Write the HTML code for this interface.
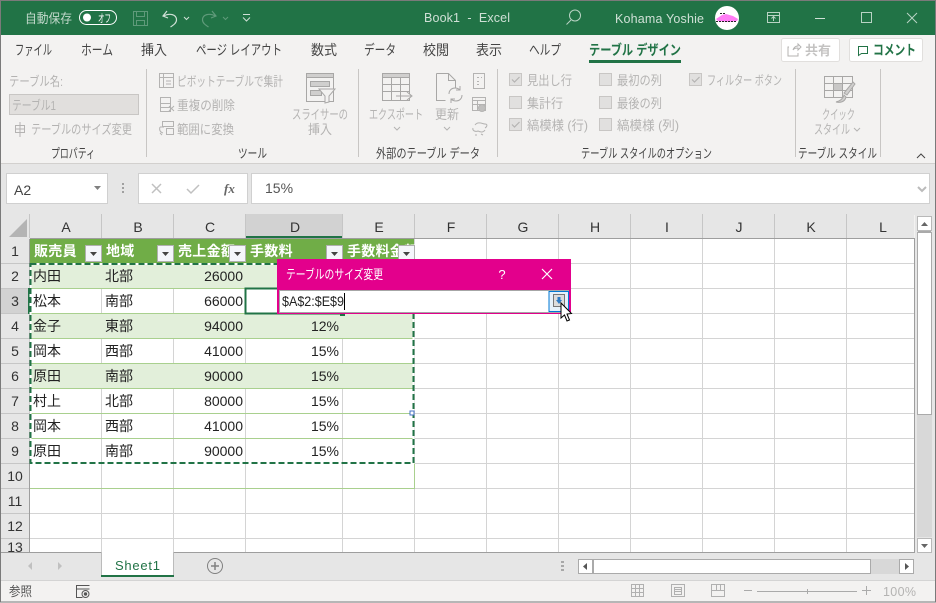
<!DOCTYPE html>
<html lang="ja"><head><meta charset="utf-8"><title>Book1 - Excel</title>
<style>
html,body{margin:0;padding:0;background:#f3f2f1;overflow:hidden}
svg{display:block;font-family:"Liberation Sans","Noto Sans CJK JP",sans-serif}
.tab{font-size:14px;fill:#444}
.dis{font-size:13px;fill:#b4b3b2}
.grp{font-size:13px;fill:#444}
.c{font-size:14px;fill:#222}
.n{font-size:14px;fill:#222;text-anchor:end}
.h{font-size:14px;font-weight:bold;fill:#fff;letter-spacing:.3px}
.col{font-size:14px;fill:#333;text-anchor:middle}
.ic{fill:none;stroke:#b4b3b2;stroke-width:1}
.cb{fill:#e1e0df;stroke:#c8c6c4}
.chk{fill:none;stroke:#b4b3b2;stroke-width:1.2}
.g{stroke:#d4d4d4;stroke-width:1}
.tl{stroke:#a9d08e;stroke-width:1}
.t{stroke:#b9d3c4;fill:none;stroke-width:1}
</style></head><body>
<svg width="936" height="603" viewBox="0 0 936 603" xmlns="http://www.w3.org/2000/svg">
<rect width="936" height="603" fill="#f3f2f1"/>
<!-- title bar -->
<rect x="0" y="0" width="936" height="35" fill="#217346"/>
<text x="25" y="23" font-size="13" fill="#c3d9cc" textLength="47" lengthAdjust="spacingAndGlyphs">自動保存</text>
<rect x="79.500" y="10.500" width="37" height="14" rx="7" fill="#217346" stroke="#fff"/>
<circle cx="87" cy="17.500" r="4" fill="#fff"/>
<text x="98" y="22" font-size="11" fill="#fff" textLength="13" lengthAdjust="spacingAndGlyphs">オフ</text>
<g fill="none" stroke="#5f9a7a"><rect x="133.500" y="11.500" width="14" height="14"/><path d="M136.500 11.500v5h8v-5M136.500 25.500v-5h8v5"/></g>
<g fill="none" stroke="#cfe0d6" stroke-width="1.200"><path d="M167 11l-4 5 5 2M163.500 16c6-3 13-2 13 4 0 3-3 5-6 7"/><path d="M184 17l2.500 2.500L189 17" stroke-width="1"/></g>
<g fill="none" stroke="#5f9a7a" stroke-width="1.200"><path d="M212 11l4 5-5 2M215.500 16c-6-3-13-2-13 4 0 3 3 5 6 7"/><path d="M223 17l2.500 2.500L228 17" stroke-width="1"/></g>
<path d="M243 14.500h7M243 17.500l3.500 3.500 3.500-3.500" fill="none" stroke="#cfe0d6"/>
<text x="424" y="22" font-size="12.500" fill="#cfe0d6" textLength="86" xml:space="preserve">Book1  -  Excel</text>
<g class="t"><circle cx="575" cy="15.500" r="5.500"/><path d="M571 20l-4.500 4.500"/></g>
<text x="615" y="23" font-size="12.500" fill="#cfe0d6" textLength="89">Kohama Yoshie</text>
<circle cx="727" cy="18" r="12" fill="#fff"/>
<path d="M716 19l6-4 4-1 7 2 5 3-1 2-9 1-10-1z" fill="#ff7cf5"/>
<path d="M716 21.500h21M720 13.500h5" stroke="#222" stroke-width="1" stroke-dasharray="2 1"/>
<g class="t"><rect x="767.500" y="12.500" width="12" height="10"/><path d="M767.500 15.500h12M773.500 21v-4M771.500 18.500l2-2 2 2"/></g>
<path d="M815 18.500h10" stroke="#cfe0d6"/>
<rect x="861.500" y="12.500" width="10" height="10" class="t"/>
<path d="M907 13l10 10M917 13l-10 10" class="t"/>
<!-- tabs -->
<text class="tab" x="15" y="55" textLength="37" lengthAdjust="spacingAndGlyphs">ファイル</text>
<text class="tab" x="81" y="55" textLength="32" lengthAdjust="spacingAndGlyphs">ホーム</text>
<text class="tab" x="141" y="55" textLength="26" lengthAdjust="spacingAndGlyphs">挿入</text>
<text class="tab" x="196" y="55" textLength="86" lengthAdjust="spacingAndGlyphs">ページ レイアウト</text>
<text class="tab" x="311" y="55" textLength="26" lengthAdjust="spacingAndGlyphs">数式</text>
<text class="tab" x="364" y="55" textLength="32" lengthAdjust="spacingAndGlyphs">データ</text>
<text class="tab" x="423" y="55" textLength="26" lengthAdjust="spacingAndGlyphs">校閲</text>
<text class="tab" x="476" y="55" textLength="26" lengthAdjust="spacingAndGlyphs">表示</text>
<text class="tab" x="529" y="55" textLength="32" lengthAdjust="spacingAndGlyphs">ヘルプ</text>
<text x="589" y="55" font-size="14" font-weight="bold" fill="#217346" textLength="92" lengthAdjust="spacingAndGlyphs">テーブル デザイン</text>
<rect x="589" y="60" width="92" height="3" fill="#217346"/>
<rect x="781.500" y="38.500" width="58" height="23" rx="2" fill="#fff" stroke="#e1dfdd"/>
<path d="M789 47h-1v9h10v-3M793 50c1-3 3-4 5-4v-2l3 3-3 3v-2c-2 0-4 0-5 2z" class="ic"/>
<text x="805" y="55" font-size="13" font-weight="bold" fill="#c4c3c2" textLength="26" lengthAdjust="spacingAndGlyphs">共有</text>
<rect x="849.500" y="38.500" width="73" height="23" rx="2" fill="#fff" stroke="#e1dfdd"/>
<path d="M858.500 46.500h9v7h-6l-3 2z" fill="none" stroke="#217346"/>
<text x="873" y="55" font-size="14" font-weight="bold" fill="#217346" textLength="43" lengthAdjust="spacingAndGlyphs">コメント</text>
<!-- ribbon -->
<g stroke="#c8c6c4"><path d="M146.500 69v88M358.500 69v88M497.500 69v88M795.500 69v88M880.500 69v88"/></g>
<text class="dis" x="9" y="86" textLength="54" lengthAdjust="spacingAndGlyphs">テーブル名:</text>
<rect x="9.500" y="94.500" width="129" height="20" fill="#e1dfdd" stroke="#c8c6c4"/>
<text class="dis" x="12" y="110" textLength="44" lengthAdjust="spacingAndGlyphs">テーブル1</text>
<g class="ic"><rect x="15.500" y="125.500" width="9" height="7"/><path d="M20 122v15M15.500 129h9"/></g>
<text class="dis" x="31" y="134" textLength="101" lengthAdjust="spacingAndGlyphs">テーブルのサイズ変更</text>
<text class="grp" x="51" y="158" textLength="44" lengthAdjust="spacingAndGlyphs">プロパティ</text>
<g class="ic"><rect x="159.500" y="73.500" width="14" height="14"/><path d="M160 77.500h13M163.500 74v13M166 81h5M166 84h5"/></g>
<text class="dis" x="177" y="86" textLength="106" lengthAdjust="spacingAndGlyphs">ピボットテーブルで集計</text>
<g class="ic"><rect x="160.500" y="97.500" width="10" height="14"/><path d="M160.500 103.500h10M160.500 107.500h10M169 106l5 5M174 106l-5 5"/></g>
<text class="dis" x="177" y="110" textLength="58" lengthAdjust="spacingAndGlyphs">重複の削除</text>
<g class="ic"><rect x="162.500" y="121.500" width="11" height="5"/><rect x="166.500" y="128.500" width="7" height="6"/><path d="M160 127h4M160 127c-1 3 0 5 3 6M162 135l-2-2"/></g>
<text class="dis" x="177" y="134" textLength="57" lengthAdjust="spacingAndGlyphs">範囲に変換</text>
<g class="ic" stroke-width="1"><rect x="306.500" y="73.500" width="27" height="28" fill="#f3f2f1" stroke="#a8a7a6"/><rect x="306.500" y="73.500" width="27" height="4" fill="#d0cfce" stroke="#a8a7a6"/><rect x="310.500" y="81.500" width="19" height="5" fill="#d0cfce" stroke="#a8a7a6"/><rect x="310.500" y="90.500" width="11" height="5" fill="#d0cfce" stroke="#a8a7a6"/><path d="M319 89h16l-6 7v6l-4 1v-7z" fill="#f3f2f1" stroke="#a8a7a6"/></g>
<text class="dis" x="292" y="119" textLength="56" lengthAdjust="spacingAndGlyphs">スライサーの</text>
<text class="dis" x="308" y="134" textLength="24" lengthAdjust="spacingAndGlyphs">挿入</text>
<text class="grp" x="238" y="158" textLength="29" lengthAdjust="spacingAndGlyphs">ツール</text>
<g stroke="#a8a7a6" fill="none"><rect x="382.500" y="73.500" width="27" height="27"/><rect x="382.500" y="73.500" width="27" height="4" fill="#d0cfce"/><path d="M382.500 84.500h27M382.500 91.500h27M391.500 78v22M400.500 78v22"/><path d="M396 96h15M407 92l5 4-5 4" fill="#f3f2f1"/></g>
<text class="dis" x="369" y="119" textLength="54" lengthAdjust="spacingAndGlyphs">エクスポート</text>
<path d="M394 127l3 3 3-3" class="ic"/>
<g stroke="#a8a7a6" fill="none"><path d="M436.500 73.500h12l7 7v8M436.500 73.500v27h9M448.500 73.500v7h7"/><path d="M449 94c0-4 3-6 6-6 2 0 4 1 5 2M462 95c0 4-3 6-6 6-2 0-4-1-5-2M460 86v4h-4M451 103v-4h4" stroke="#a8a7a6"/></g>
<text class="dis" x="435" y="119" textLength="24" lengthAdjust="spacingAndGlyphs">更新</text>
<path d="M444 127l3 3 3-3" class="ic"/>
<g class="ic"><rect x="473.500" y="73.500" width="11" height="15"/><path d="M477 77.500h2M481 77.500h1M477 81.500h2M477 84.500h2"/><rect x="472.500" y="97.500" width="13" height="13"/><path d="M472.500 100.500h13M472.500 104.500h13M477.500 101v9"/><circle cx="482" cy="108" r="3.500" fill="#c0bfbe"/><path d="M475 125c3-4 8-1 10-1 3 0 2 3 0 4M473 128c-1 3 3 4 5 3 2 1 5 2 7-1M475 135h2M481 134l2 1"/></g>
<text class="grp" x="376" y="158" textLength="104" lengthAdjust="spacingAndGlyphs">外部のテーブル データ</text>
<!-- checkboxes -->
<rect class="cb" x="509.500" y="73.500" width="12" height="12"/><path class="chk" d="M512 79.500l2.500 2.500 5-5"/>
<rect class="cb" x="509.500" y="96.500" width="12" height="12"/>
<rect class="cb" x="509.500" y="118.500" width="12" height="12"/><path class="chk" d="M512 124.500l2.500 2.500 5-5"/>
<rect class="cb" x="599.500" y="73.500" width="12" height="12"/>
<rect class="cb" x="599.500" y="96.500" width="12" height="12"/>
<rect class="cb" x="599.500" y="118.500" width="12" height="12"/>
<rect class="cb" x="689.500" y="73.500" width="12" height="12"/><path class="chk" d="M692 79.500l2.500 2.500 5-5"/>
<text class="dis" x="527" y="85" textLength="45" lengthAdjust="spacingAndGlyphs">見出し行</text>
<text class="dis" x="527" y="108" textLength="36" lengthAdjust="spacingAndGlyphs">集計行</text>
<text class="dis" x="527" y="130" textLength="61" lengthAdjust="spacingAndGlyphs">縞模様 (行)</text>
<text class="dis" x="617" y="85" textLength="45" lengthAdjust="spacingAndGlyphs">最初の列</text>
<text class="dis" x="617" y="108" textLength="45" lengthAdjust="spacingAndGlyphs">最後の列</text>
<text class="dis" x="617" y="130" textLength="62" lengthAdjust="spacingAndGlyphs">縞模様 (列)</text>
<text class="dis" x="707" y="85" textLength="75" lengthAdjust="spacingAndGlyphs">フィルター ボタン</text>
<text class="grp" x="581" y="158" textLength="131" lengthAdjust="spacingAndGlyphs">テーブル スタイルのオプション</text>
<g stroke="#a8a7a6" fill="none"><rect x="824.500" y="76.500" width="28" height="21"/><path d="M824.500 83.500h28M824.500 90.500h28M833.500 77v20M842.500 77v20"/><rect x="834" y="84" width="8" height="6" fill="#c8c7c6" stroke="none"/><path d="M855 84l-8 11-3-2 9-11zM844 95c-1 4-4 6-8 7 4 1 9 0 10-5z" fill="#d0cfce"/></g>
<text class="dis" x="822" y="119" textLength="33" lengthAdjust="spacingAndGlyphs">クイック</text>
<text class="dis" x="814" y="134" textLength="36" lengthAdjust="spacingAndGlyphs">スタイル</text>
<path d="M854 128l3 3 3-3" class="ic"/>
<text class="grp" x="798" y="158" textLength="79" lengthAdjust="spacingAndGlyphs">テーブル スタイル</text>
<path d="M917 158l4-4 4 4" fill="none" stroke="#444"/>
<!-- formula bar -->
<rect x="0" y="163" width="936" height="52" fill="#e6e6e6"/>
<path d="M0 163.500h936" stroke="#d2d0ce"/>
<rect x="6.500" y="173.500" width="101" height="30" fill="#fff" stroke="#d0d0d0"/>
<text x="14" y="195" font-size="14" fill="#444">A2</text>
<path d="M94 186h7l-3.500 4z" fill="#808080"/>
<g fill="#a0a0a0"><rect x="122" y="183" width="2" height="2"/><rect x="122" y="187" width="2" height="2"/><rect x="122" y="191" width="2" height="2"/></g>
<rect x="138.500" y="173.500" width="109" height="30" fill="#fff" stroke="#d0d0d0"/>
<path d="M152 184l9 9M161 184l-9 9" stroke="#c0c0c0" stroke-width="1.500"/>
<path d="M187 189l4 4 8-8" fill="none" stroke="#c0c0c0" stroke-width="1.500"/>
<text x="224" y="193" font-family="Liberation Serif" font-size="13" font-style="italic" font-weight="bold" fill="#666">fx</text>
<rect x="251.500" y="173.500" width="678" height="30" fill="#fff" stroke="#d0d0d0"/>
<text x="265" y="193" font-size="14" fill="#555">15%</text>
<path d="M918 187l4 4 4-4" fill="none" stroke="#bbb" stroke-width="2"/>
<!-- grid background -->
<rect x="30" y="239" width="884" height="314" fill="#fff"/>
<!-- col header -->
<rect x="0" y="214" width="914" height="25" fill="#e6e6e6"/>
<rect x="246" y="214" width="97" height="23" fill="#d2d2d2"/>
<rect x="245" y="236" width="98" height="2" fill="#217346"/>
<path d="M9 237h18v-18z" fill="#b4b4b4"/>
<g stroke="#c6c6c6"><path d="M29.500 214v24M101.500 214v24M173.500 214v24M245.500 214v24M342.500 214v24M414.500 214v24M486.500 214v24M558.500 214v24M630.500 214v24M702.500 214v24M774.500 214v24M846.500 214v24"/></g>
<path d="M30 238.500h884" stroke="#9e9e9e"/>
<text class="col" x="66" y="232">A</text><text class="col" x="138" y="232">B</text><text class="col" x="210" y="232">C</text><text class="col" x="295" y="232">D</text><text class="col" x="379" y="232">E</text><text class="col" x="451" y="232">F</text><text class="col" x="523" y="232">G</text><text class="col" x="595" y="232">H</text><text class="col" x="667" y="232">I</text><text class="col" x="739" y="232">J</text><text class="col" x="811" y="232">K</text><text class="col" x="883" y="232">L</text>
<!-- row header -->
<rect x="0" y="239" width="30" height="314" fill="#e6e6e6"/>
<rect x="1" y="289" width="28" height="24" fill="#d2d2d2"/>
<g stroke="#c6c6c6"><path d="M1 263.500h28M1 288.500h28M1 313.500h28M1 338.500h28M1 363.500h28M1 388.500h28M1 413.500h28M1 438.500h28M1 463.500h28M1 488.500h28M1 513.500h28M1 538.500h28"/></g>
<path d="M29.500 239v314" stroke="#9e9e9e"/>
<rect x="28" y="288" width="2" height="26" fill="#217346"/>
<g font-size="14" fill="#333" text-anchor="middle"><text x="15" y="256">1</text><text x="15" y="281">2</text><text x="15" y="306">3</text><text x="15" y="331">4</text><text x="15" y="356">5</text><text x="15" y="381">6</text><text x="15" y="406">7</text><text x="15" y="431">8</text><text x="15" y="456">9</text><text x="15" y="481">10</text><text x="15" y="506">11</text><text x="15" y="531">12</text><text x="15" y="552">13</text></g>
<!-- grid lines -->
<g class="g"><path d="M30 488.500h884M30 513.500h884M30 538.500h884M415 263.500h499M415 288.500h499M415 313.500h499M415 338.500h499M415 363.500h499M415 388.500h499M415 413.500h499M415 438.500h499M415 463.500h499"/>
<path d="M414.500 239v314M486.500 239v314M558.500 239v314M630.500 239v314M702.500 239v314M774.500 239v314M846.500 239v314M101.500 264v289M173.500 264v289M245.500 264v289M342.500 264v289"/></g>
<!-- table -->
<rect x="30" y="239" width="384" height="25" fill="#70ad47"/>
<rect x="30" y="264" width="384" height="25" fill="#e2efda"/>
<rect x="30" y="314" width="384" height="25" fill="#e2efda"/>
<rect x="30" y="364" width="384" height="25" fill="#e2efda"/>
<g class="tl"><path d="M30 288.500h384M30 313.500h384M30 338.500h384M30 363.500h384M30 388.500h384M30 413.500h384M30 438.500h384M30 463.500h384M30 488.500h385M414.500 463v26"/></g>
<!-- headers -->
<g class="h"><text x="34" y="256">販売員</text><text x="106" y="256">地域</text><text x="178" y="256">売上金額</text><text x="250" y="256">手数料</text><text x="347" y="256">手数料金額</text></g>
<rect x="415" y="239" width="71" height="24" fill="#fff"/>
<path d="M415 263.500h71M486.500 239v25" class="g"/>
<g><rect x="85.500" y="245.500" width="16" height="16" fill="#f4f6fb" stroke="#b0b0b0"/><path d="M90 252h7l-3.500 4z" fill="#444"/>
<rect x="157.500" y="245.500" width="16" height="16" fill="#f4f6fb" stroke="#b0b0b0"/><path d="M162 252h7l-3.500 4z" fill="#444"/>
<rect x="229.500" y="245.500" width="16" height="16" fill="#f4f6fb" stroke="#b0b0b0"/><path d="M234 252h7l-3.500 4z" fill="#444"/>
<rect x="326.500" y="245.500" width="16" height="16" fill="#f4f6fb" stroke="#b0b0b0"/><path d="M331 252h7l-3.500 4z" fill="#444"/>
<rect x="398.500" y="245.500" width="16" height="16" fill="#f4f6fb" stroke="#b0b0b0"/><path d="M403 252h7l-3.500 4z" fill="#444"/></g>
<!-- cells -->
<g class="c"><text x="33" y="281">内田</text><text x="105" y="281">北部</text><text x="33" y="306">松本</text><text x="105" y="306">南部</text><text x="33" y="331">金子</text><text x="105" y="331">東部</text><text x="33" y="356">岡本</text><text x="105" y="356">西部</text><text x="33" y="381">原田</text><text x="105" y="381">南部</text><text x="33" y="406">村上</text><text x="105" y="406">北部</text><text x="33" y="431">岡本</text><text x="105" y="431">西部</text><text x="33" y="456">原田</text><text x="105" y="456">南部</text></g>
<g class="n"><text x="243" y="281">26000</text><text x="243" y="306">66000</text><text x="243" y="331">94000</text><text x="243" y="356">41000</text><text x="243" y="381">90000</text><text x="243" y="406">80000</text><text x="243" y="431">41000</text><text x="243" y="456">90000</text><text x="339" y="331">12%</text><text x="339" y="356">15%</text><text x="339" y="381">15%</text><text x="339" y="406">15%</text><text x="339" y="431">15%</text><text x="339" y="456">15%</text></g>
<!-- marching ants -->
<rect x="30.500" y="264" width="383" height="199" fill="none" stroke="#fff" stroke-width="2"/>
<rect x="30.500" y="264" width="383" height="199" fill="none" stroke="#217346" stroke-width="2" stroke-dasharray="6 3"/>
<rect x="410" y="411" width="4" height="4" fill="#fff" stroke="#4472c4" stroke-width="1"/>
<!-- active cell -->
<rect x="245.500" y="288.500" width="97" height="25" fill="#fff" stroke="#217346" stroke-width="2"/>
<rect x="340" y="311" width="5" height="5" fill="#217346"/>
<!-- dialog -->
<rect x="277" y="259" width="294" height="55" fill="#e3008c"/>
<text x="286" y="279" font-size="13" fill="#fff" textLength="97" lengthAdjust="spacingAndGlyphs">テーブルのサイズ変更</text>
<text x="502" y="279" font-size="13" fill="#fff" text-anchor="middle">?</text>
<path d="M542 269l10 10M552 269l-10 10" stroke="#fff" stroke-width="1.200"/>
<rect x="279.500" y="290.500" width="289" height="22" fill="#fff" stroke="#a6a6a6"/>
<text x="282" y="306" font-size="13.500" fill="#222" textLength="62" lengthAdjust="spacingAndGlyphs">$A$2:$E$9</text>
<path d="M344.500 293v17" stroke="#000"/>
<rect x="549" y="291.500" width="19.500" height="20" fill="#e5f1fb" stroke="#0078d4"/>
<rect x="553.500" y="294.500" width="11" height="12" fill="#dcdcdc" stroke="#777"/>
<path d="M556 300h6l-3 4z M557.500 297h3v3h-3z" fill="#2f7bc4"/>
<path d="M561 303v15l3.500-3 2.500 6 2.500-1-2.500-6 4.500-.5z" fill="#fff" stroke="#000" stroke-width="1"/>
<!-- grid right edge / bottom -->
<path d="M914.500 238v315" stroke="#9e9e9e"/>
<rect x="915" y="214" width="20" height="340" fill="#e6e6e6"/>
<rect x="917.500" y="216.500" width="14" height="14" fill="#fff" stroke="#b8b8b8"/>
<path d="M921 226h7l-3.500-4z" fill="#666"/>
<rect x="918" y="231" width="13" height="2" fill="#aaa"/>
<rect x="917.500" y="232.500" width="14" height="182" fill="#fff" stroke="#aaa"/>
<rect x="917" y="415" width="15" height="122" fill="#d8d8d8"/>
<rect x="917.500" y="538.500" width="14" height="14" fill="#fff" stroke="#b8b8b8"/>
<path d="M921 544h7l-3.500 4z" fill="#666"/>
<!-- sheet tabs -->
<rect x="0" y="553" width="936" height="28" fill="#e6e6e6"/>
<path d="M0 552.500h101M173 552.500h741" stroke="#9e9e9e"/>
<rect x="101" y="552" width="73" height="25" fill="#fff"/>
<path d="M101.500 552v24M173.500 552v24" stroke="#bbb"/>
<rect x="101" y="575" width="73" height="2" fill="#217346"/>
<text x="115" y="570" font-size="13" fill="#217346" textLength="45">Sheet1</text>
<path d="M32 562v8l-4-4zM58 562v8l4-4z" fill="#c0c0c0"/>
<circle cx="215" cy="566" r="7.500" fill="none" stroke="#808080"/>
<path d="M211 566h8M215 562v8" stroke="#808080" stroke-width="1.500"/>
<g fill="#a8a8a8"><rect x="561" y="561" width="3" height="2"/><rect x="561" y="565" width="3" height="2"/><rect x="561" y="569" width="3" height="2"/></g>
<rect x="578.500" y="559.500" width="335" height="14" fill="#d8d8d8" stroke="#d8d8d8"/>
<rect x="578.500" y="559.500" width="14" height="14" fill="#fff" stroke="#aaa"/>
<path d="M587 563v7l-4-3.500z" fill="#555"/>
<rect x="593.500" y="559.500" width="277" height="14" fill="#fff" stroke="#aaa"/>
<rect x="899.500" y="559.500" width="14" height="14" fill="#fff" stroke="#aaa"/>
<path d="M905 563v7l4-3.500z" fill="#555"/>
<!-- status -->
<rect x="0" y="581" width="936" height="22" fill="#f3f2f1"/>
<path d="M0 580.500h936" stroke="#d4d4d4"/>
<text x="9" y="596" font-size="13" fill="#555" textLength="23" lengthAdjust="spacingAndGlyphs">参照</text>
<g fill="none" stroke="#555"><path d="M89.500 585.500h-13v12h6M76.500 589h13"/><circle cx="85.500" cy="594" r="3.500"/><circle cx="85.500" cy="594" r="1.200" fill="#555"/></g>
<g fill="none" stroke="#b0b0b0"><rect x="631.500" y="584.500" width="12" height="12"/><path d="M635.500 585v11M639.500 585v11M632 588.500h11M632 592.500h11"/>
<rect x="671.500" y="584.500" width="13" height="12"/><rect x="674.500" y="587.500" width="7" height="7"/><path d="M675 589.500h6M675 591.500h6"/>
<path d="M711.500 584.500h13v12h-13zM711.500 590.500h13M716.500 585v5M720.500 585v5"/></g>
<path d="M744 590.500h8M757 591.500h100M862 590.500h9M866.500 586v9M807.500 589v5" stroke="#aaa" fill="none"/>
<text x="883" y="596" font-size="12.500" fill="#b4b3b2" textLength="33">100%</text>
<!-- window border -->
<rect x="0.500" y="0.500" width="935" height="601.500" fill="none" stroke="#7a7a7a"/>
</svg>
</body></html>
